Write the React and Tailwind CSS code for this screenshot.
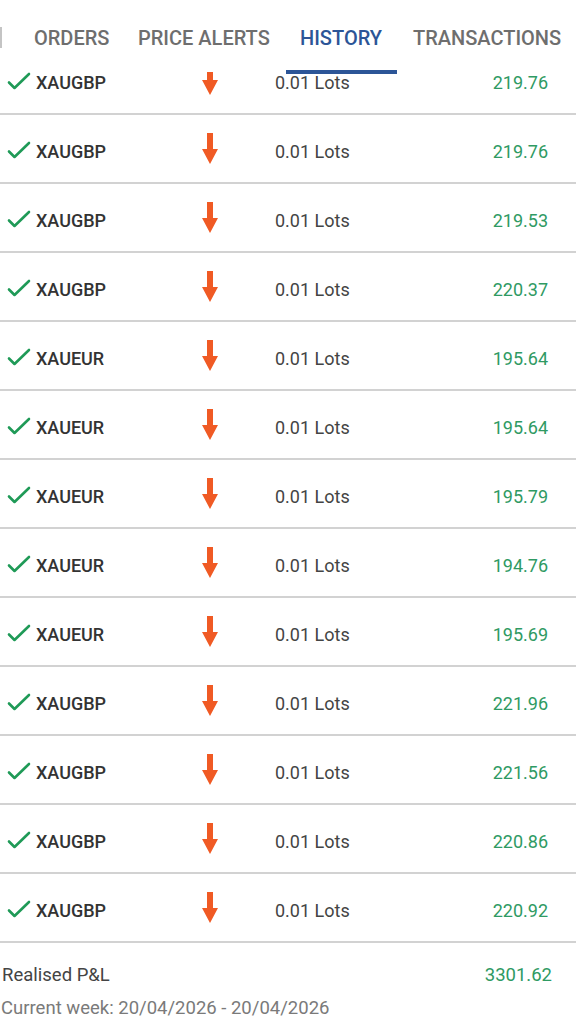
import React from "react";

const rows = [
  ["XAUGBP", "219.76"],
  ["XAUGBP", "219.76"],
  ["XAUGBP", "219.53"],
  ["XAUGBP", "220.37"],
  ["XAUEUR", "195.64"],
  ["XAUEUR", "195.64"],
  ["XAUEUR", "195.79"],
  ["XAUEUR", "194.76"],
  ["XAUEUR", "195.69"],
  ["XAUGBP", "221.96"],
  ["XAUGBP", "221.56"],
  ["XAUGBP", "220.86"],
  ["XAUGBP", "220.92"],
];

function Check() {
  return (
    <svg width="24" height="20" viewBox="0 0 24 20" className="shrink-0">
      <path d="M2 10.5 L7.5 16 L22 2" fill="none" stroke="#1f9a57" strokeWidth="2.6" strokeLinecap="round" strokeLinejoin="round" />
    </svg>
  );
}

function Arrow() {
  return (
    <svg width="18" height="32" viewBox="0 0 18 32">
      <rect x="6" y="0" width="6" height="19" fill="#f05a24" />
      <polygon points="1,16 17,16 9,31" fill="#f05a24" />
    </svg>
  );
}

export default function App() {
  return (
    <div className="w-[576px] h-[1024px] bg-white flex flex-col overflow-hidden" style={{ fontFamily: "Roboto, 'Liberation Sans', sans-serif" }}>
      <div className="relative z-10 h-[72px] bg-white shrink-0 flex items-start">
        <div className="w-[2px] h-[21px] bg-[#c4c4c4] mt-[27px] shrink-0" />
        <div className="flex items-center h-[76px] text-[20px] font-medium text-[#6e6e6e] whitespace-nowrap">
          <div className="w-[136px] pl-[32px]">ORDERS</div>
          <div className="w-[162px]">PRICE ALERTS</div>
          <div className="w-[113px] text-[#2c5597] relative h-full flex items-center">HISTORY
            <div className="absolute left-[-14px] w-[111px] bottom-[2px] h-[4px] bg-[#2c5597]" />
          </div>
          <div>TRANSACTIONS</div>
        </div>
      </div>
      <div className="flex-1 overflow-hidden">
        <div className="-mt-[26px]">
          {rows.map(([sym, val], i) => (
            <div key={i} className="h-[69px] border-b-2 border-[#d2d2d2] flex items-center pt-[5px]">
              <div className="w-[206px] flex items-center pl-[7px] gap-[5px]">
                <Check />
                <span className="text-[18px] font-medium text-[#333333]">{sym}</span>
              </div>
              <div className="w-[69px] -mt-[4px]"><div className="ml-[-5px]"><Arrow /></div></div>
              <div className="text-[18px] text-[#444444]">0.01 Lots</div>
              <div className="flex-1 text-right pr-[28px] text-[18px] text-[#2f9a63]">{val}</div>
            </div>
          ))}
          <div className="pt-[19px] flex items-center justify-between pl-[2px] pr-[24px]">
            <span className="text-[18.5px] text-[#444444]">Realised P&amp;L</span>
            <span className="text-[18.5px] text-[#2f9a63]">3301.62</span>
          </div>
          <div className="pl-[1px] mt-[5px] text-[18.5px] text-[#7a7a7a]">Current week: 20/04/2026 - 20/04/2026</div>
        </div>
      </div>
    </div>
  );
}
